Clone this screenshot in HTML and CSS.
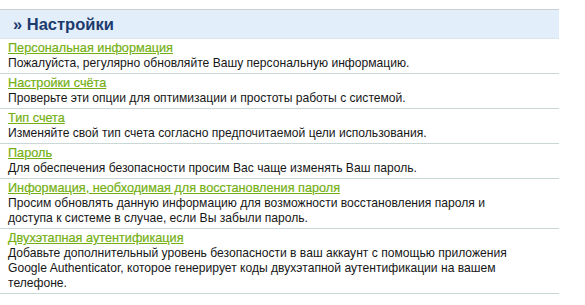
FILE: index.html
```html
<!DOCTYPE html>
<html lang="ru">
<head>
<meta charset="utf-8">
<link rel="stylesheet" href="styles.css">
</head>
<body>
<div class="panel">
  <h2 class="title">» Настройки</h2>
  <ul class="list">
    <li class="item"><a class="link" href="#">Персональная информация</a><p class="desc">Пожалуйста, регулярно обновляйте Вашу персональную информацию.</p></li>
    <li class="item"><a class="link" href="#">Настройки счёта</a><p class="desc">Проверьте эти опции для оптимизации и простоты работы с системой.</p></li>
    <li class="item"><a class="link" href="#">Тип счета</a><p class="desc">Изменяйте свой тип счета согласно предпочитаемой цели использования.</p></li>
    <li class="item"><a class="link" href="#">Пароль</a><p class="desc">Для обеспечения безопасности просим Вас чаще изменять Ваш пароль.</p></li>
    <li class="item"><a class="link" href="#">Информация, необходимая для восстановления пароля</a><p class="desc">Просим обновлять данную информацию для возможности восстановления пароля и доступа к системе в случае, если Вы забыли пароль.</p></li>
    <li class="item"><a class="link" href="#">Двухэтапная аутентификация</a><p class="desc">Добавьте дополнительный уровень безопасности в ваш аккаунт с помощью приложения Google Authenticator, которое генерирует коды двухэтапной аутентификации на вашем телефоне.</p></li>
  </ul>
</div>
</body>
</html>
```
FILE: styles.css
```css
html, body {
  margin: 0;
  padding: 0;
  background: #ffffff;
}
body {
  font-family: "Liberation Sans", Arial, sans-serif;
  color: #1a1a1a;
}
.panel {
  width: 559px;
  padding-top: 9px;
}
.title {
  margin: 0;
  height: 28px;
  line-height: 28px;
  padding-left: 13px;
  background: #e2eefa;
  border-top: 1px solid #c9cfd4;
  border-bottom: 1px dotted #d4dde6;
  color: #1c3a6c;
  font-size: 16.5px;
  font-weight: bold;
}
.list {
  list-style: none;
  margin: 0;
  padding: 0;
}
.item {
  padding: 2px 8px 2px;
  border-bottom: 1px solid #c9d7d7;
}
.link {
  display: block;
  font-size: 12.7px;
  line-height: 15px;
  color: #74b014;
  text-decoration: underline;
  -webkit-text-stroke: 0.2px #74b014;
}
.desc {
  margin: 0;
  font-size: 12.1px;
  line-height: 15px;
  color: #161616;
  padding-right: 40px;
}
```
